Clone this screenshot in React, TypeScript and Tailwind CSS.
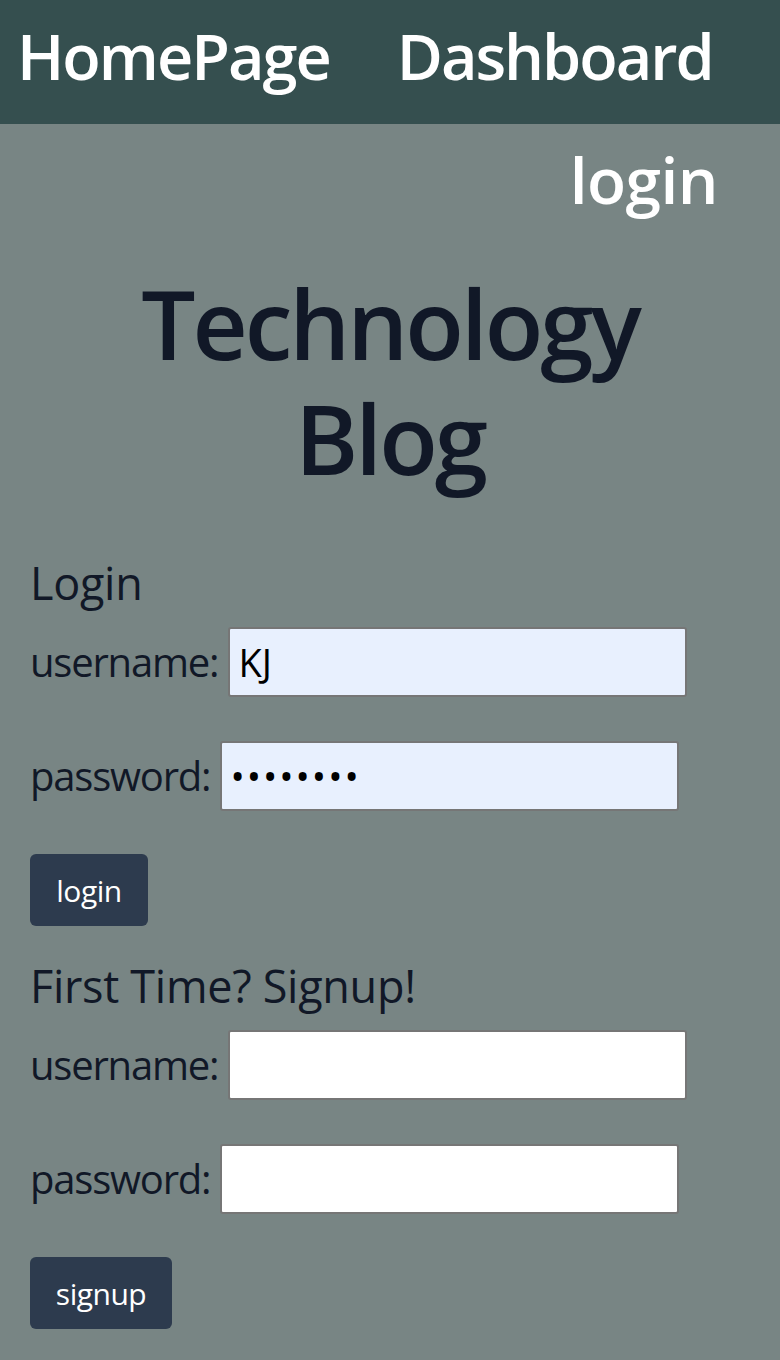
import React from "react";

function Row({ label, type, value, filled }: { label: string; type: string; value?: string; filled?: boolean }) {
  return (
    <div className="flex items-baseline gap-[10px]">
      <label className="text-[40px] leading-[56px] tracking-[-1.2px] text-[#111827]">{label}</label>
      <input
        type={type}
        defaultValue={value}
        className={
          "h-[70px] w-[459px] rounded-[3px] border-2 border-[#767676] px-[8px] text-[38px] text-black outline-none " +
          (type === "password" ? "tracking-[2px] " : "") +
          (filled ? "bg-[#e8f0fe]" : "bg-white")
        }
        style={{ fontFamily: "'Open Sans', sans-serif" }}
      />
    </div>
  );
}

export default function App() {
  return (
    <div className="min-h-screen bg-[#788584] font-['Open_Sans',sans-serif]">
      <header className="h-[124px] bg-[#354f4f] flex items-start pt-[12px] pl-[17px] gap-[67px] text-white text-[63px] font-semibold leading-[87px] tracking-[-2px]">
        <a>HomePage</a>
        <a>Dashboard</a>
      </header>
      <div className="mt-[8px] flex justify-end pr-[62px] text-[64px] leading-[96px] font-semibold tracking-[-0.5px] text-white">
        <a>login</a>
      </div>
      <h1 className="mt-[37px] flex flex-col items-center text-[96px] font-semibold tracking-[-3px] text-[#111827]">
        <span className="block leading-[115px]">Technology</span>
        <span className="block leading-[115px]">Blog</span>
      </h1>
      <section className="px-[30px] flex flex-col items-start">
        <h2 className="mt-[60px] text-[45px] leading-[56px] tracking-[-0.3px] text-[#111827]">Login</h2>
        <div className="mt-[16px]">
          <Row label="username:" type="text" value="KJ" filled />
        </div>
        <div className="mt-[44px]">
          <Row label="password:" type="password" value="password" filled />
        </div>
        <button className="mt-[43px] h-[72px] w-[118px] rounded-[6px] bg-[#2d3b4e] text-[30px] tracking-[-0.5px] text-white">
          login
        </button>
        <h2 className="mt-[32px] text-[45px] leading-[56px] tracking-[-0.3px] text-[#111827]">First Time? Signup!</h2>
        <div className="mt-[16px]">
          <Row label="username:" type="text" />
        </div>
        <div className="mt-[44px]">
          <Row label="password:" type="password" />
        </div>
        <button className="mt-[43px] h-[72px] w-[142px] rounded-[6px] bg-[#2d3b4e] text-[30px] tracking-[-0.5px] text-white">
          signup
        </button>
      </section>
    </div>
  );
}
